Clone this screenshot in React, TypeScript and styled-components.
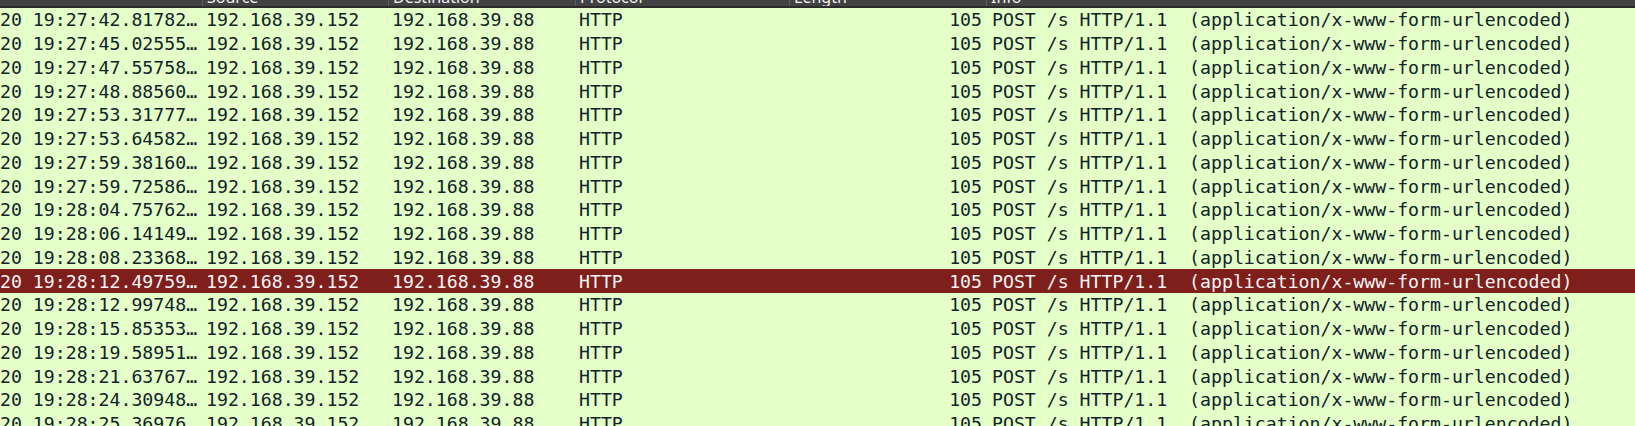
import React from 'react'
import styled, { createGlobalStyle } from 'styled-components'

const GlobalStyle = createGlobalStyle`
  html, body {
    margin: 0;
    padding: 0;
    background: #e4ffc7;
    overflow: hidden;
  }
`

const COLUMNS = '202px 186px 187px 214px 197px 1fr'

const PacketList = styled.div`
  width: 1635px;
  height: 426px;
  overflow: hidden;
  background: #e4ffc7;
`

const HeaderRow = styled.div`
  display: grid;
  grid-template-columns: ${COLUMNS};
  height: 8px;
  overflow: hidden;
  background: #424242;
  border-bottom: 2px solid #2b2b2b;
  box-sizing: border-box;
`

const HeaderCell = styled.div`
  border-left: 1px solid #5c5c5c;
  padding-left: 4px;
  font-family: 'Noto Sans', 'Liberation Sans', sans-serif;
  font-size: 16px;
  line-height: 18px;
  color: #f2f2f2;
  white-space: nowrap;
  overflow: hidden;

  &:first-child {
    border-left: none;
  }

  span {
    display: block;
    margin-top: -12px;
  }
`

const Row = styled.div<{ $selected?: boolean }>`
  display: grid;
  grid-template-columns: ${COLUMNS};
  height: 23.75px;
  align-items: center;
  background: ${({ $selected }) => ($selected ? '#7f1f1c' : '#e4ffc7')};
  color: ${({ $selected }) => ($selected ? '#f4f4f4' : '#10232b')};
  font-family: 'DejaVu Sans Mono', 'Liberation Mono', monospace;
  font-size: 18.2px;
  white-space: pre;
`

const Cell = styled.div<{ $align?: 'left' | 'right'; $pad?: number }>`
  overflow: hidden;
  text-align: ${({ $align }) => $align || 'left'};
  padding-left: ${({ $pad }) => ($pad === undefined ? 4 : $pad)}px;
  padding-right: ${({ $align }) => ($align === 'right' ? 4 : 0)}px;
`

const times = [
  '19:27:42.81782',
  '19:27:45.02555',
  '19:27:47.55758',
  '19:27:48.88560',
  '19:27:53.31777',
  '19:27:53.64582',
  '19:27:59.38160',
  '19:27:59.72586',
  '19:28:04.75762',
  '19:28:06.14149',
  '19:28:08.23368',
  '19:28:12.49759',
  '19:28:12.99748',
  '19:28:15.85353',
  '19:28:19.58951',
  '19:28:21.63767',
  '19:28:24.30948',
  '19:28:25.36976',
]

const SELECTED = 11

export default function App() {
  return (
    <>
      <GlobalStyle />
      <PacketList>
        <HeaderRow>
          <HeaderCell />
          <HeaderCell><span>Source</span></HeaderCell>
          <HeaderCell><span>Destination</span></HeaderCell>
          <HeaderCell><span>Protocol</span></HeaderCell>
          <HeaderCell><span>Length</span></HeaderCell>
          <HeaderCell><span>Info</span></HeaderCell>
        </HeaderRow>
        {times.map((t, i) => (
          <Row key={t + i} $selected={i === SELECTED}>
            <Cell $pad={0}>{`20 ${t}…`}</Cell>
            <Cell>192.168.39.152</Cell>
            <Cell>192.168.39.88</Cell>
            <Cell>HTTP</Cell>
            <Cell $align="right">105</Cell>
            <Cell $pad={6}>POST /s HTTP/1.1  (application/x-www-form-urlencoded)</Cell>
          </Row>
        ))}
      </PacketList>
    </>
  )
}
